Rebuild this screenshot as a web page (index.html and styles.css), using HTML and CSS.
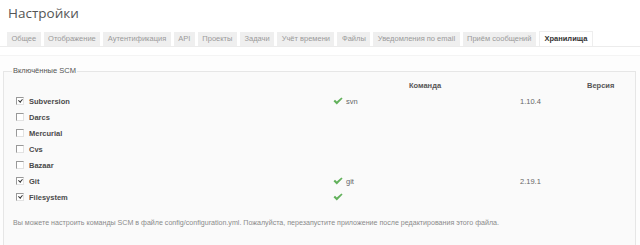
FILE: index.html
```html
<!DOCTYPE html>
<html>
<head>
    <link rel="stylesheet" href="styles.css">
</head>
<body>
    <h2 class="title">Настройки</h2>

    <ul class="tabs">
        <li>Общее</li>
        <li>Отображение</li>
        <li>Аутентификация</li>
        <li>API</li>
        <li>Проекты</li>
        <li>Задачи</li>
        <li>Учёт времени</li>
        <li>Файлы</li>
        <li>Уведомления по email</li>
        <li>Приём сообщений</li>
        <li class="active">Хранилища</li>
    </ul>

    <div class="tab-content">
        <fieldset class="box">
            <legend>Включённые SCM</legend>
            <div class="scm-table">
                <div class="head"></div>
                <div class="head center">Команда</div>
                <div class="head version-head">Версия</div>

                <div class="name"><span class="cb checked"></span>Subversion</div>
                <div class="cmd"><span class="ok"></span>svn</div>
                <div class="ver">1.10.4</div>

                <div class="name"><span class="cb"></span>Darcs</div>
                <div class="cmd"></div>
                <div class="ver"></div>

                <div class="name"><span class="cb"></span>Mercurial</div>
                <div class="cmd"></div>
                <div class="ver"></div>

                <div class="name"><span class="cb"></span>Cvs</div>
                <div class="cmd"></div>
                <div class="ver"></div>

                <div class="name"><span class="cb"></span>Bazaar</div>
                <div class="cmd"></div>
                <div class="ver"></div>

                <div class="name"><span class="cb checked"></span>Git</div>
                <div class="cmd"><span class="ok"></span>git</div>
                <div class="ver">2.19.1</div>

                <div class="name"><span class="cb checked"></span>Filesystem</div>
                <div class="cmd"><span class="ok"></span></div>
                <div class="ver"></div>
            </div>
            <p class="note">Вы можете настроить команды SCM в файле config/configuration.yml. Пожалуйста, перезапустите приложение после редактирования этого файла.</p>
        </fieldset>
    </div>
</body>
</html>
```

FILE: styles.css
```css
body
{
    margin: 0;
    height: 245px;
    overflow: hidden;
    background-color: #fff;
    font-family: "Liberation Sans", Arial, sans-serif;
    font-size: 7.5px;
    color: #555;
}
.title
{
    margin: 0;
    padding: 3px 8px 0 8px;
    height: 29px;
    font-family: "Open Sans", sans-serif;
    font-weight: normal;
    font-size: 13.5px;
    line-height: 20px;
    color: #555;
}
.tabs
{
    list-style: none;
    margin: 0;
    padding: 0 0 0 7px;
    display: flex;
    gap: 3px;
    height: 14px;
    border-bottom: 1px solid #ececec;
}
.tabs li
{
    height: 14px;
    line-height: 14px;
    padding: 0 4.5px;
    background-color: #efefef;
    color: #9a9a9a;
}
.tabs li.active
{
    background-color: #fff;
    color: #333;
    font-weight: bold;
    height: 14px;
    border: 1px solid #eee;
    border-bottom: none;
    margin-top: -1px;
}
.tab-content
{
    margin-top: 8px;
    padding: 10px 4px 0 3px;
    background-color: #fdfdfd;
    border-top: 1px solid #f4f4f4;
}
.box
{
    margin: 0;
    padding: 0 8px 0 8px;
    border: 1px solid #e6e6e6;
    border-bottom: none;
    background-color: #fafafa;
    height: 180px;
}
.box legend
{
    padding: 0 1px;
    margin-left: 0;
    color: #555;
    line-height: 10px;
}
.scm-table
{
    display: grid;
    grid-template-columns: 318px 190px 1fr;
    grid-auto-rows: 16px;
    align-items: center;
    margin-top: 1px;
}
.head
{
    font-weight: bold;
    color: #555;
}
.center
{
    text-align: center;
}
.version-head
{
    padding-left: 67px;
}
.name
{
    padding-left: 4px;
    font-weight: bold;
    color: #4a4a4a;
    display: flex;
    align-items: center;
}
.cmd
{
    padding-left: 3px;
    color: #666;
    display: flex;
    align-items: center;
}
.ver
{
    color: #666;
}
.cb
{
    display: inline-block;
    width: 6px;
    height: 6px;
    margin-right: 5px;
    border-top: 1px solid #999;
    border-left: 1px solid #999;
    border-right: 1px solid #e2e2e2;
    border-bottom: 1px solid #e2e2e2;
    background-color: #fff;
    position: relative;
}
.cb.checked::after
{
    content: "";
    position: absolute;
    left: 1.5px;
    top: 0;
    width: 1.5px;
    height: 3px;
    border-right: 1px solid #333;
    border-bottom: 1px solid #333;
    transform: rotate(40deg);
}
.ok
{
    display: inline-block;
    width: 10px;
    height: 8px;
    margin-right: 3px;
    background: no-repeat center / contain url("data:image/svg+xml,%3Csvg xmlns='http://www.w3.org/2000/svg' viewBox='0 0 10 8'%3E%3Cpath d='M0.5 4.2 L2 2.8 L3.8 4.6 L8.4 0.4 L9.6 1.6 L3.8 7.4 Z' fill='%2362b15b'/%3E%3C/svg%3E");
}
.note
{
    margin: 14px 0 0 1px;
    color: #8a8a8a;
    font-size: 7.1px;
}
```
